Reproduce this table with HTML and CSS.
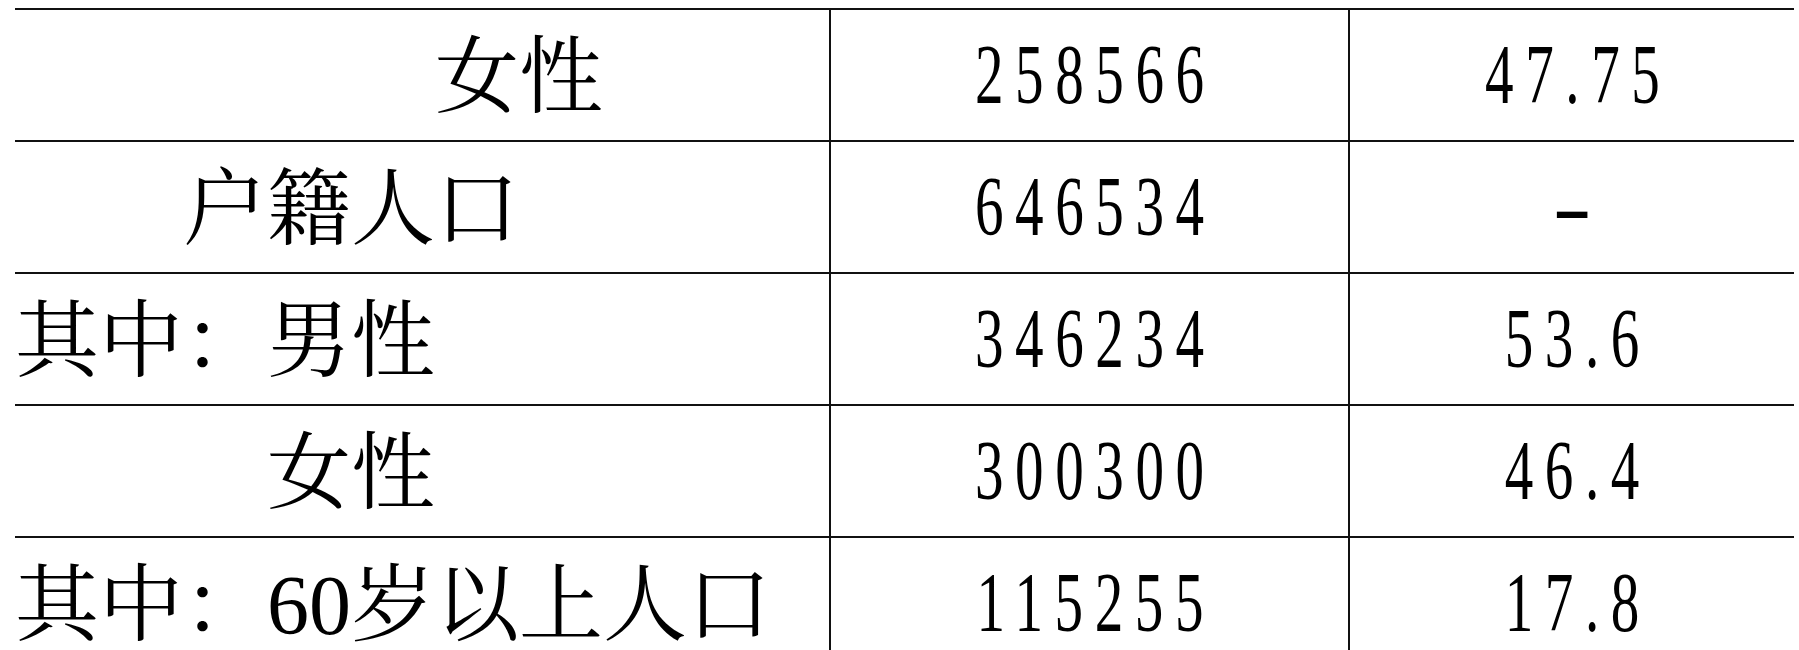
FILE: index.html
```html
<!DOCTYPE html>
<html lang="zh-CN">
<head>
<meta charset="utf-8">
<title>人口统计</title>
<link rel="stylesheet" href="styles.css">
</head>
<body>
<table class="stats">
  <colgroup>
    <col class="col-name">
    <col class="col-count">
    <col class="col-pct">
  </colgroup>
  <tbody>
    <tr>
      <td class="name indent-5">女性</td>
      <td class="num"><span class="fig">258566</span></td>
      <td class="num"><span class="fig">47.75</span></td>
    </tr>
    <tr>
      <td class="name indent-2">户籍人口</td>
      <td class="num"><span class="fig">646534</span></td>
      <td class="num"><span class="dash">-</span></td>
    </tr>
    <tr>
      <td class="name">其中：男性</td>
      <td class="num"><span class="fig">346234</span></td>
      <td class="num"><span class="fig">53.6</span></td>
    </tr>
    <tr>
      <td class="name indent-3">女性</td>
      <td class="num"><span class="fig">300300</span></td>
      <td class="num"><span class="fig">46.4</span></td>
    </tr>
    <tr>
      <td class="name">其中：60岁以上人口</td>
      <td class="num"><span class="fig">115255</span></td>
      <td class="num"><span class="fig">17.8</span></td>
    </tr>
  </tbody>
</table>
</body>
</html>
```

FILE: styles.css
```css
html, body {
  margin: 0;
  padding: 0;
  background: #ffffff;
}

.stats {
  border-collapse: collapse;
  table-layout: fixed;
  width: 1779px;
  margin: 8px 0 0 15px;
  color: #000000;
}

.col-name { width: 815px; }
.col-count { width: 519px; }
.col-pct { width: 445px; }

.stats td {
  height: 130px;
  padding: 0;
  border-top: 2px solid #111111;
  border-bottom: 2px solid #111111;
  vertical-align: middle;
  line-height: 1;
  white-space: nowrap;
}

.stats td + td {
  border-left: 2px solid #111111;
}

.stats td.name {
  font-family: "Liberation Serif", "Noto Serif CJK SC", "Noto Sans CJK SC", serif;
  font-size: 84px;
  text-align: left;
  height: 124px;
  padding-top: 6px;
}

.stats td.indent-2 { padding-left: 168px; }
.stats td.indent-3 { padding-left: 252px; }
.stats td.indent-5 { padding-left: 420px; }

.num {
  font-family: "Liberation Serif", "Noto Sans CJK SC", serif;
  font-size: 84px;
  text-align: center;
}

/* narrow, widely tracked figures as in the printed table */
.fig {
  display: inline-block;
  letter-spacing: 17px;
  padding-left: 17px;
  transform: scaleX(0.68);
  transform-origin: center;
}

.dash {
  display: inline-block;
  transform: scaleX(1.4);
}
```
